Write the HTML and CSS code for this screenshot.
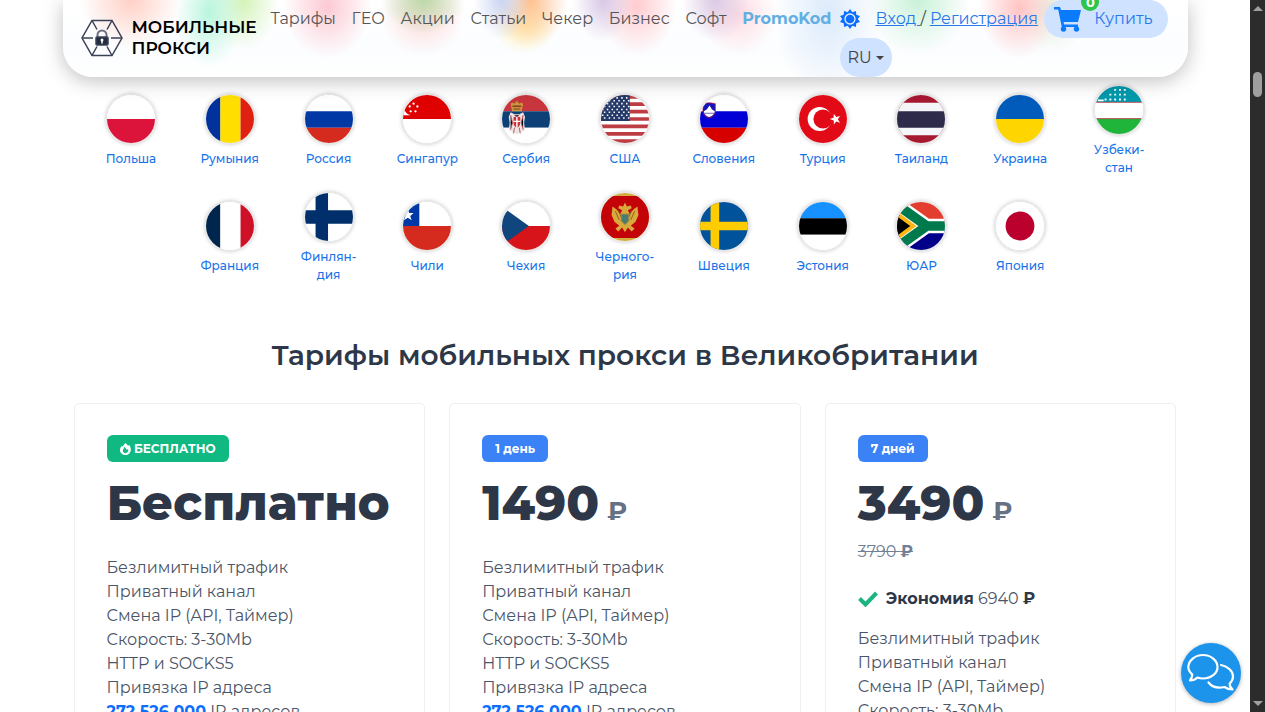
FILE: index.html
```html
<!DOCTYPE html>
<html lang="ru">
<head>
<meta charset="utf-8">
<meta name="viewport" content="width=device-width, initial-scale=1">
<title>Мобильные прокси</title>
<link rel="stylesheet" href="styles.css">
</head>
<body>
<div class="window">
<div class="page">
  <header class="header">
    <a class="brand" href="#">
      <svg class="brand-logo" viewBox="0 0 42 38" fill="none" stroke="#3a4257" stroke-width="1.5">
        <path d="M11 1.500h20l10 17.500-10 17.500H11L1 19z"/>
        <path d="M11 1.500l5 9M31 1.500l-5 9M11 36.500l5-9M31 36.500l-5-9M1 19h11M41 19H30"/>
        <path d="M16.500 18v-2a4.500 4.500 0 0 1 9 0v2" stroke-width="2" stroke="#6b7180"/>
        <rect x="15" y="18" width="12" height="8" rx="1" fill="#252c40"/>
        <circle cx="21" cy="21" r="1.500" fill="#fff" stroke="none"/><path d="M21 21v3.500" stroke="#fff"/>
      </svg>
      <span class="brand-name">МОБИЛЬНЫЕ<br>ПРОКСИ</span>
    </a>
    <nav class="nav">
      <a href="#">Тарифы</a><a href="#">ГЕО</a><a href="#">Акции</a><a href="#">Статьи</a><a href="#">Чекер</a><a href="#">Бизнес</a><a href="#">Софт</a><a class="promo" href="#">PromoKod</a>
    </nav>
    <div class="tools">
      <div class="tools-row">
        <button class="theme" aria-label="Тема">
          <svg viewBox="0 0 20 20" width="20" height="20"><path fill="#0d6efd" d="M10 0l2.300 3.200L15.900 1.900 16.300 5.800 20 7 17.800 10 20 13l-3.700 1.200-.4 3.900-3.600-1.300L10 20l-2.300-3.200-3.600 1.300-.4-3.900L0 13l2.200-3L0 7l3.700-1.200.4-3.900 3.600 1.300z"/><circle cx="10" cy="10" r="5" fill="#0d6efd" stroke="#e6effb" stroke-width="1.300"/></svg>
        </button>
        <span class="auth"><a href="#">Вход </a>/ <a href="#">Регистрация</a></span>
        <button class="buy">
          <svg viewBox="0 0 28 26" width="28" height="26" fill="#0a7bff"><path d="M0 1h6l1 3h20l-3 12H9.500l.6 2.500H24V21H7.800L4.200 3.500H0z"/><circle cx="9.500" cy="23" r="2.700"/><circle cx="22.500" cy="23" r="2.700"/></svg>
          <span class="count">0</span>
          <span>Купить</span>
        </button>
      </div>
      <button class="lang">RU<span class="caret"></span></button>
    </div>
  </header>

  <main class="content">
    <section class="flags">
      <a href="#"><svg viewBox="0 0 50 50"><path fill="#fff" d="M0 0h50v50H0z"/><path fill="#dc143c" d="M0 25h50v25H0z"/></svg>Польша</a>
      <a href="#"><svg viewBox="0 0 50 50"><path fill="#00319c" d="M0 0h15v50H0z"/><path fill="#ffde00" d="M15 0h21v50H15z"/><path fill="#de2110" d="M36 0h14v50H36z"/></svg>Румыния</a>
      <a href="#"><svg viewBox="0 0 50 50"><path fill="#fff" d="M0 0h50v17H0z"/><path fill="#0039a6" d="M0 17h50v17H0z"/><path fill="#d52b1e" d="M0 34h50v16H0z"/></svg>Россия</a>
      <a href="#"><svg viewBox="0 0 50 50"><path fill="#fff" d="M0 0h50v50H0z"/><path fill="#df0000" d="M0 0h50v25H0z"/><g fill="#fff"><path d="M3 8a8 8 0 0 0 5 13H0v-9z"/><circle cx="11" cy="9" r="1.200"/><circle cx="7" cy="12" r="1.200"/><circle cx="15" cy="12" r="1.200"/><circle cx="8" cy="17" r="1.200"/><circle cx="13" cy="17" r="1.200"/></g></svg>Сингапур</a>
      <a href="#"><svg viewBox="0 0 50 50"><path fill="#c6363c" d="M0 0h50v17H0z"/><path fill="#0c4076" d="M0 17h50v17H0z"/><path fill="#fff" d="M0 34h50v16H0z"/><path fill="#c8963a" d="M9 9q2-2 4 0l2.500-3L18 9q2-2 4 0l-1.500 8h-10z"/><path fill="#8b3a2a" d="M11 11h9v1.500h-9zM12 14h7v1h-7z"/><path fill="#eee4e4" d="M9 18l4 2h5l4-2 2 5-1 6 1 8-5 2-3.500 2-3.500-2-5-2 1-8-1-6z"/><path stroke="#b9585c" stroke-width="1" d="M9 21l2 8-2 7M22 21l-2 8 2 7M13 34l-1 6M18 34l1 6M13 21l2.500 2L18 21"/><path fill="#cf3038" d="M12 23h7v6q0 4-3.500 5-3.500-1-3.500-5z"/><path stroke="#fff" stroke-width="1.500" d="M15.500 23v11M12 27.500h7"/></svg>Сербия</a>
      <a href="#"><svg viewBox="0 0 50 50"><path fill="#fff" d="M0 0h50v50H0z"/><path stroke="#bd3d44" stroke-width="3.850" d="M0 2h50M0 9.600h50M0 17.300h50M0 25h50M0 32.700h50M0 40.400h50M0 48h50"/><path fill="#253a68" d="M0 0h30v27H0z"/><path stroke="#fff" stroke-width="1.600" stroke-dasharray="1.600 3.400" d="M1 3h29M3 6h27M1 9h29M3 12h27M1 15h29M3 18h27M1 21h29M3 24h27"/></svg>США</a>
      <a href="#"><svg viewBox="0 0 50 50"><path fill="#fff" d="M0 0h50v17H0z"/><path fill="#0000d6" d="M0 17h50v17H0z"/><path fill="#d60000" d="M0 34h50v16H0z"/><path fill="#1414b8" stroke="#c22" stroke-width=".7" d="M3 9q7-2 13 0v7q0 6-6.500 8Q3 22 3 16z"/><path fill="#fff" d="M4 17l3-2 3-4 2.500 4 3 2q-1 5-6 6-5-1-5.500-6z"/><path stroke="#66b" d="M5 19h10"/></svg>Словения</a>
      <a href="#"><svg viewBox="0 0 50 50"><path fill="#e30a17" d="M0 0h50v50H0z"/><circle cx="21.500" cy="25" r="12.500" fill="#fff"/><circle cx="25" cy="25" r="10" fill="#e30a17"/><path fill="#fff" d="M32 25l4-1.200.3-4.300 2.500 3.500 4-1.200-2.400 3.500 2.400 3.500-4-1.300-2.500 3.300-.1-4.200z"/></svg>Турция</a>
      <a href="#"><svg viewBox="0 0 50 50"><path fill="#a51931" d="M0 0h50v50H0z"/><path fill="#f4f5f8" d="M0 8h50v34H0z"/><path fill="#2d2a4a" d="M0 17h50v17H0z"/></svg>Таиланд</a>
      <a href="#"><svg viewBox="0 0 50 50"><path fill="#005bbb" d="M0 0h50v25H0z"/><path fill="#ffd500" d="M0 25h50v25H0z"/></svg>Украина</a>
      <a href="#"><svg viewBox="0 0 50 50"><path fill="#0099ad" d="M0 0h50v17H0z"/><path fill="#fff" d="M0 17h50v17H0z"/><path fill="#1eb53a" d="M0 34h50v16H0z"/><path stroke="#b04a50" d="M0 17h50M0 34h50"/><path stroke="#fff" stroke-width="2" stroke-dasharray="2 3" d="M20 4h12M15 9h17M10 14h22"/><path stroke="#fff" stroke-width="2" d="M3 15h6"/></svg>Узбеки-<br>стан</a>
      <a href="#"><svg viewBox="0 0 50 50"><path fill="#00264d" d="M0 0h15v50H0z"/><path fill="#fff" d="M15 0h21v50H15z"/><path fill="#ce1126" d="M36 0h14v50H36z"/></svg>Франция</a>
      <a href="#"><svg viewBox="0 0 50 50"><path fill="#fff" d="M0 0h50v50H0z"/><path fill="#002f6c" d="M11 0h13v50H11zM0 18h50v14H0z"/></svg>Финлян-<br>дия</a>
      <a href="#"><svg viewBox="0 0 50 50"><path fill="#fff" d="M0 0h50v25H0z"/><path fill="#d52b1e" d="M0 25h50v25H0z"/><path fill="#0039a6" d="M0 0h17v25H0z"/><path fill="#fff" d="M5 7l1.500 4.500H11l-3.500 3L9 19l-4-2.500L1 19l1.500-4.500-3.500-3h4.500z"/></svg>Чили</a>
      <a href="#"><svg viewBox="0 0 50 50"><path fill="#fff" d="M0 0h50v25H0z"/><path fill="#d7141a" d="M0 25h50v25H0z"/><path fill="#11457e" d="M-7 0l35 25-35 25z"/></svg>Чехия</a>
      <a href="#"><svg viewBox="0 0 50 50"><path fill="#d3ae3b" d="M0 0h50v50H0z"/><path fill="#c40308" d="M0 3h50v44H0z"/><g fill="#d9a93c"><path d="M25 10l2 4 4-1 1 3-4 2 2 4 4-5 4-3 1 9-3 7-5 4 4 3-3 3-4-4-3 5-3-5-4 4-3-3 4-3-5-4-3-7 1-9 4 3 4 5 2-4-4-2 1-3 4 1z"/></g><path stroke="#8d5a24" d="M15 19l4 9M35 19l-4 9M18 18l3 7M32 18l-3 7"/><path fill="#477b73" stroke="#a8893a" d="M21 22h8v7l-4 4-4-4z"/></svg>Черного-<br>рия</a>
      <a href="#"><svg viewBox="0 0 50 50"><path fill="#00529b" d="M0 0h50v50H0z"/><path fill="#fecc00" d="M11 0h9v50h-9zM0 20.500h50v9H0z"/></svg>Швеция</a>
      <a href="#"><svg viewBox="0 0 50 50"><path fill="#1791ff" d="M0 0h50v17H0z"/><path d="M0 17h50v17H0z"/><path fill="#fff" d="M0 34h50v16H0z"/></svg>Эстония</a>
      <a href="#"><svg viewBox="0 0 50 50"><path fill="#e23d2f" d="M0 0h50v25H0z"/><path fill="#00008b" d="M0 25h50v25H0z"/><path fill="none" stroke="#fff" stroke-width="15" d="M-4 0L31 25 -4 50M31 25h19"/><path fill="#000" d="M-6 6L16 25-6 44z"/><path fill="none" stroke="#ffb612" stroke-width="4" d="M-6 8L17 25-6 42"/><path fill="none" stroke="#007a4d" stroke-width="10" d="M-4 0L31 25 -4 50M31 25h19"/></svg>ЮАР</a>
      <a href="#"><svg viewBox="0 0 50 50"><path fill="#fff" d="M0 0h50v50H0z"/><circle cx="25" cy="25" r="15" fill="#bc002d"/></svg>Япония</a>
    </section>

    <h2 class="title">Тарифы мобильных прокси в Великобритании</h2>

    <section class="plans">
      <article class="plan">
        <span class="badge badge-free"><svg viewBox="0 0 12 13" width="11" height="12"><path fill="#fff" fill-rule="evenodd" d="M4 2L6 0l3 3 1-1c4 5 1 11-4 11C0 13-2 7 2 3l1 1zm-.5 5c-1 2 .5 4 2.500 4s4-2 2.500-4.500L7.500 7.500 5 4z"/></svg> БЕСПЛАТНО</span>
        <div class="price">Бесплатно</div>
        <ul class="features"><li>Безлимитный трафик</li><li>Приватный канал</li><li>Смена IP (API, Таймер)</li><li>Скорость: 3-30Mb</li><li>HTTP и SOCKS5</li><li>Привязка IP адреса</li><li><b>272 526 000</b> IP адресов</li></ul>
      </article>
      <article class="plan">
        <span class="badge">1 день</span>
        <div class="price">1490 <span class="rub">₽</span></div>
        <ul class="features"><li>Безлимитный трафик</li><li>Приватный канал</li><li>Смена IP (API, Таймер)</li><li>Скорость: 3-30Mb</li><li>HTTP и SOCKS5</li><li>Привязка IP адреса</li><li><b>272 526 000</b> IP адресов</li></ul>
      </article>
      <article class="plan">
        <span class="badge">7 дней</span>
        <div class="price">3490 <span class="rub">₽</span></div>
        <del class="old">3790 <strong>₽</strong></del>
        <p class="saving"><svg viewBox="0 0 20 16" width="20" height="16" fill="none" stroke="#1ab580" stroke-width="4"><path d="M1.500 7.500l6 6L18.500 2"/></svg><span><strong>Экономия</strong> 6940 <strong>₽</strong></span></p>
        <ul class="features"><li>Безлимитный трафик</li><li>Приватный канал</li><li>Смена IP (API, Таймер)</li><li>Скорость: 3-30Mb</li><li>HTTP и SOCKS5</li></ul>
      </article>
    </section>
  </main>

  <button class="chat" aria-label="Чат">
    <svg viewBox="0 0 60 60" fill="none" stroke="#fff" stroke-width="2.200" stroke-linejoin="round" stroke-linecap="round"><path d="M22 12c8 0 14.500 5.500 14.500 12S30 35.500 22 35.500c-2 0-4-.3-5.500-1-2 2-4.500 3-7.500 3 1.500-2 2.300-4 2.300-6-2.500-2.200-4-4.700-4-7.500C7.500 17.500 14 12 22 12z"/><path d="M40 22c7 1.500 12 6 12 11.500 0 2.500-1.300 5-3.300 7 0 2.500.8 4.500 2.800 6-3.500 0-6-1-8-2.500-7 1.500-13-.5-16-4.500"/></svg>
  </button>
</div>
<div class="scrollbar" aria-hidden="true"><i class="arrow-up"></i><i class="thumb"></i><i class="arrow-down"></i></div>
</div>
</body>
</html>
```
FILE: styles.css
```css
* { box-sizing: border-box; }
body { margin: 0; font: 16px/24px Montserrat, Inter, "Open Sans", sans-serif; color: #4a5568; background: #fff; }
a { color: #1a73e8; }
button { border: 0; padding: 0; background: none; font: inherit; cursor: pointer; }
.window { display: flex; height: 100vh; overflow: hidden; }
.page { flex: 1; position: relative; overflow: hidden; }

.header {
  position: absolute; z-index: 2; top: 0; left: 5%; right: 5%;
  display: flex; align-items: flex-start;
  padding: 0 20px 0 18px;
  border-radius: 0 0 30px 30px;
  box-shadow: 0 4px 20px rgba(0, 0, 0, .25);
  background:
    radial-gradient(ellipse 50px 48px at 6% 0, #ffd0c5, #ffd0c500),
    radial-gradient(ellipse 34px 56px at 13% 12px, #b9f5dd, #b9f5dd00),
    radial-gradient(ellipse 36px 50px at 16% 0, #d3f3b8, #d3f3b800),
    radial-gradient(ellipse 44px 52px at 23.500% 6px, #fcc9d3, #fcc9d300),
    radial-gradient(ellipse 42px 34px at 32% 0, #bcd9a7, #bcd9a700),
    radial-gradient(ellipse 42px 40px at 32% 16px, #fddada, #fddada00),
    radial-gradient(ellipse 28px 40px at 39% 0, #cbd5f3, #cbd5f300),
    radial-gradient(ellipse 38px 48px at 41.500% 0, #ffc08f, #ffc08f00),
    radial-gradient(ellipse 32px 30px at 41% 24px, #fff0ae, #fff0ae00),
    radial-gradient(ellipse 30px 42px at 48% 0, #d8c7e6, #d8c7e600),
    radial-gradient(ellipse 40px 50px at 51% 6px, #ffcbd0, #ffcbd000),
    radial-gradient(ellipse 34px 42px at 58% 0, #dac9e4, #dac9e400),
    radial-gradient(ellipse 40px 42px at 60% 14px, #ffdbe2, #ffdbe200),
    radial-gradient(ellipse 54px 90px at 68% 12px, #dceafb, #dceafb00),
    radial-gradient(ellipse 52px 54px at 76% 0, #c9f1d8, #c9f1d800),
    radial-gradient(ellipse 40px 50px at 85% 8px, #ffc3c3, #ffc3c300),
    radial-gradient(ellipse 34px 44px at 88% 10px, #e4eede, #e4eede00),
    linear-gradient(#fff, #fbfdff 50px, #fff);
}
.brand { display: flex; align-items: center; gap: 9px; padding-top: 17px; color: #000; text-decoration: none; }
.brand-logo { width: 42px; height: 38px; }
.brand-name { width: 139px; font-weight: 600; font-size: 17px; line-height: 21px; }
.nav { flex: 1; display: flex; justify-content: space-between; padding-top: 7px; }
.nav a { color: #555; text-decoration: none; }
.nav .promo { color: #62afe3; font-weight: 700; }
.tools { width: 336px; padding-left: 8px; }
.tools-row { display: flex; align-items: center; height: 38px; }
.theme { height: 20px; }
.theme svg { display: block; }
.auth { margin: 0 auto 0 16px; color: #444; }
.auth a { color: #2878ed; }
.buy { position: relative; display: flex; align-items: center; gap: 12px; height: 38px; padding: 0 15px 0 10px; border-radius: 20px; background: #cfe2ff; color: #2878ed; }
.count { position: absolute; top: -7px; left: 37px; width: 18px; height: 18px; border-radius: 9px; background: #2ec54b; color: #fff; font-size: 13px; font-weight: 700; line-height: 19px; }
.lang { display: flex; align-items: center; gap: 4px; height: 39px; padding: 0 8px; border-radius: 20px; background: #cfe2ff; color: #444; }
.caret { border: 4px solid transparent; border-top-color: #444; border-bottom: 0; }

.content { padding: 78px 5% 0; }
.flags { display: flex; flex-wrap: wrap; justify-content: center; padding: 0 19px; }
.flags a { width: calc(100% / 11); padding: 7px 0 8px; align-self: center; text-align: center; text-decoration: none; font-size: 12px; line-height: 18px; font-weight: 500; color: #1773ea; }
.flags svg { display: block; width: 50px; height: 50px; margin: 0 auto 6px; border: 1px solid #e4e4e4; border-radius: 50%; box-shadow: 0 0 4px rgba(0, 0, 0, .25); }
.title { margin: 44px 0 29px; text-align: center; font-size: 28px; line-height: 38px; font-weight: 600; color: #2d3748; }
.plans { display: grid; grid-template-columns: repeat(3, minmax(0, 1fr)); gap: 24px; padding: 0 11px; }
.plan { padding: 31px 32px; border: 1px solid #eeeff1; border-radius: 5px; min-height: 400px; }
.badge { display: inline-block; padding: 0 13px; border-radius: 6px; background: #3b82f6; color: #fff; font-size: 12px; line-height: 27px; font-weight: 700; }
.badge-free { background: #10b981; }
.badge-free svg { vertical-align: -2px; }
.price { height: 58px; margin-top: 12px; font-size: 48px; line-height: 58px; font-weight: 800; color: #2d3748; white-space: nowrap; }
.rub { margin-left: -6px; font-size: 26px; line-height: 26px; font-weight: 700; color: #667184; }
.features { margin: 24px 0 0; padding: 0; list-style: none; }
.features b { color: #0d6efd; }
.old { display: block; margin-top: 8px; color: #718096; }
.saving { display: flex; align-items: center; gap: 8px; margin: 23px 0 0; }
.saving strong { color: #2d3748; }
.saving + .features { margin-top: 16px; }
.chat { position: absolute; right: 9px; bottom: 9px; width: 60px; height: 60px; border-radius: 50%; background: #1c94eb; box-shadow: 0 1px 4px rgba(0, 0, 0, .3); }
.chat svg { display: block; }

.scrollbar { width: 15px; background: #2c2c2c; display: flex; flex-direction: column; align-items: center; padding: 6px 0; }
.arrow-up { border: 5px solid transparent; border-top: 0; border-bottom-color: #a0a0a0; }
.thumb { width: 9px; height: 25px; margin: 61px 0 auto; border-radius: 5px; background: #9f9f9f; }
.arrow-down { border: 5px solid transparent; border-bottom: 0; border-top-color: #a0a0a0; }
```
